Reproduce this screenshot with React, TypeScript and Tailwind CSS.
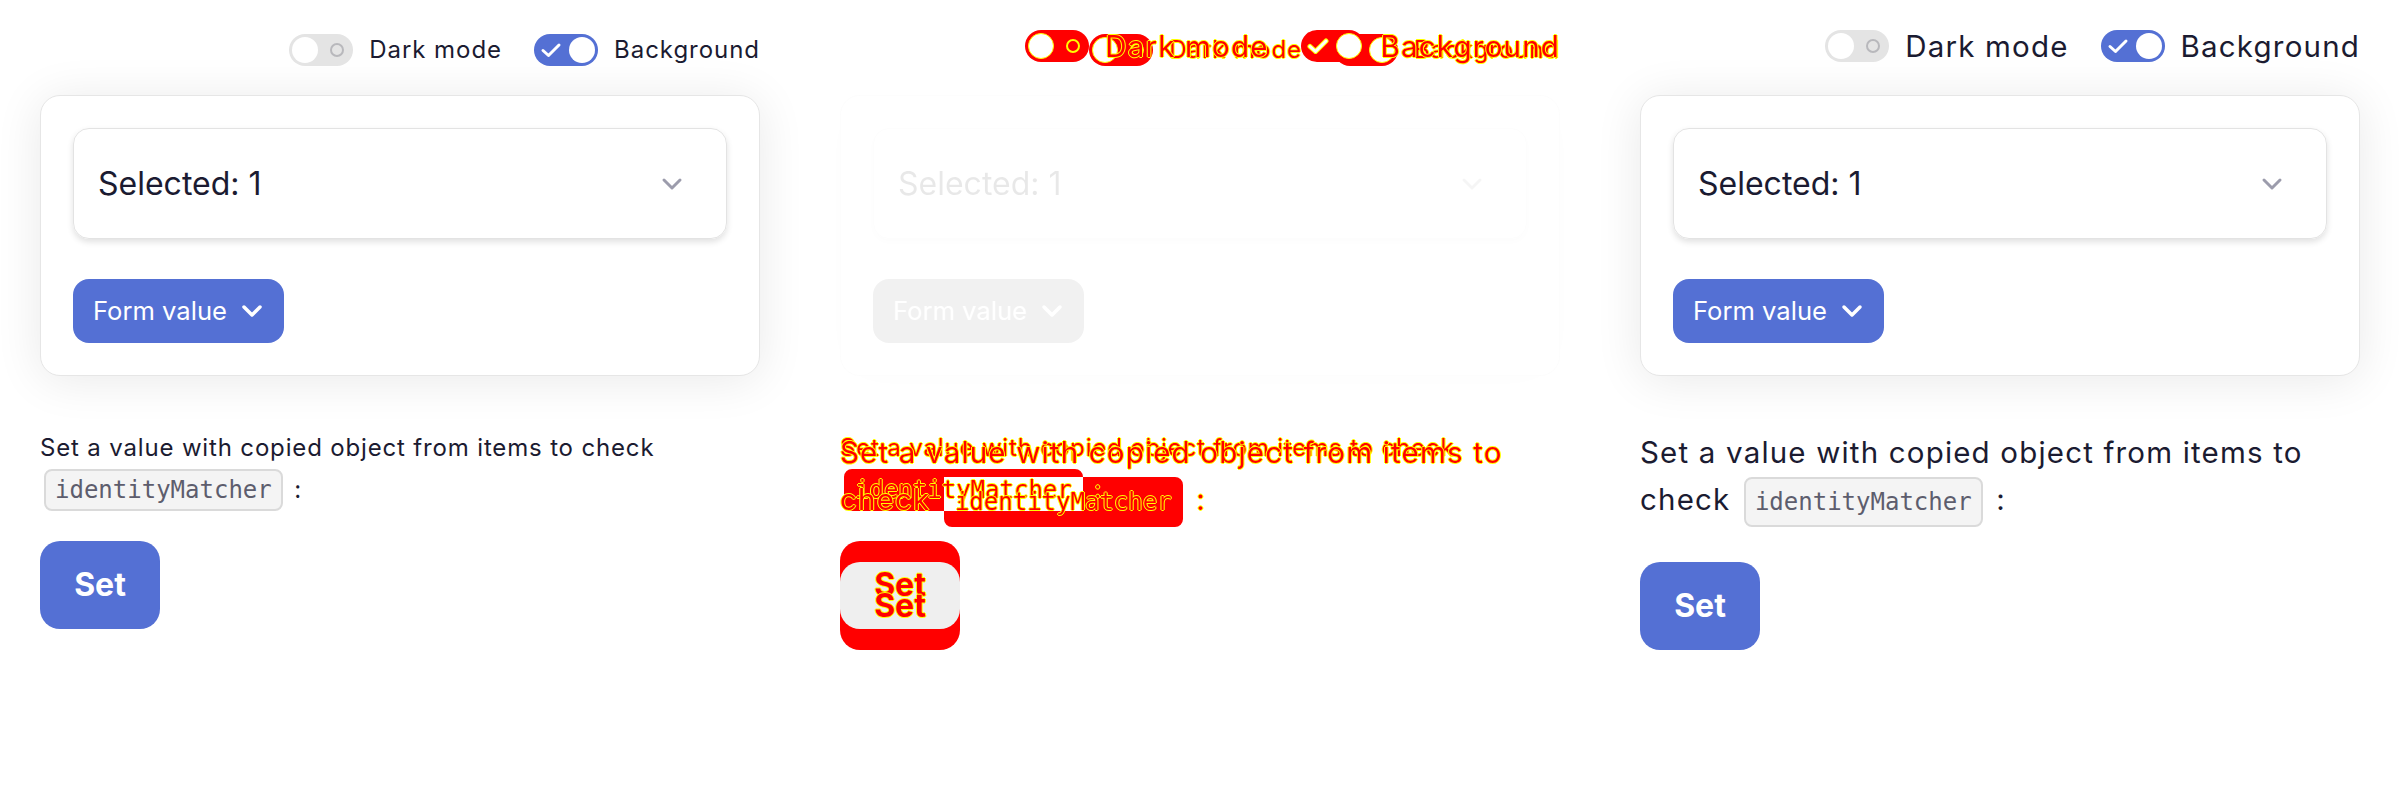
import type { ReactNode } from 'react';

// Three views of the same demo: small text, a pixel diff, large text
type Variant = 'normal' | 'shapes' | 'text';
type Size = 'sm' | 'lg';

const BLUE = 'bg-[#5470d4]';
const INK = 'text-[#1b1b31]';
const OUTLINE = '[text-shadow:1px_0_0_#ffff00,-1px_0_0_#ffff00,0_1px_0_#ffff00,0_-1px_0_#ffff00]';
const DIFF_TEXT = `text-[#ff0000] ${OUTLINE}`;

const SIZES = {
  sm: {
    top: 'pt-8',
    row: 'h-9',
    label: 'text-[24px] tracking-[0.04em]',
    para: 'mt-[51px] text-[24px] leading-[42px] tracking-[0.035em]',
    code: 'h-[42px] leading-[38px]',
    setMt: 'mt-[30px]',
  },
  lg: {
    top: 'pt-6',
    row: 'h-[44px]',
    label: 'text-[29.5px] tracking-[0.04em]',
    para: 'mt-[53px] text-[29.5px] leading-[47px] tracking-[0.04em]',
    code: 'h-[50px] leading-[46px]',
    setMt: 'mt-[35px]',
  },
} as const;

function textTone(v: Variant, normal: string) {
  if (v === 'normal') return normal;
  if (v === 'shapes') return 'text-transparent';
  return DIFF_TEXT;
}

function Check({ v }: { v: Variant }) {
  return (
    <svg width="22" height="16" viewBox="0 0 22 16" fill="none" className="ml-[3px]">
      {v === 'shapes' && (
        <path d="M3 8.5 L8.5 13.5 L19 3" stroke="#ffff00" strokeWidth="5" strokeLinecap="round" strokeLinejoin="round" />
      )}
      <path d="M3 8.5 L8.5 13.5 L19 3" stroke="#ffffff" strokeWidth="3" strokeLinecap="round" strokeLinejoin="round" />
    </svg>
  );
}

function Toggle({ on, v }: { on: boolean; v: Variant }) {
  if (v === 'text') return <div className="w-16 h-8 shrink-0" />;
  const body = v === 'shapes' ? 'bg-[#ff0000]' : on ? BLUE : 'bg-[#e4e4e4]';
  const knob = v === 'shapes' ? 'bg-white border border-[#ffff00]' : 'bg-white';
  return (
    <div className={`w-16 h-8 shrink-0 rounded-full ${body} flex items-center justify-between px-[3px]`}>
      {on ? (
        <>
          <Check v={v} />
          <div className={`w-[26px] h-[26px] rounded-full ${knob}`} />
        </>
      ) : (
        <>
          <div className={`w-[26px] h-[26px] rounded-full ${knob}`} />
          <div
            className={`w-[14px] h-[14px] mr-[6px] rounded-full border-2 ${
              v === 'shapes' ? 'border-[#ffff00]' : 'border-[#b8b8bc]'
            }`}
          />
        </>
      )}
    </div>
  );
}

function Chevron({ color, width }: { color: string; width: number }) {
  return (
    <svg width="22" height="14" viewBox="0 0 22 14" fill="none">
      <path d="M3 3 L11 11 L19 3" stroke={color} strokeWidth={width} strokeLinecap="round" strokeLinejoin="round" />
    </svg>
  );
}

function Card({ v }: { v: Variant }) {
  return (
    <div
      className={`mt-[27px] rounded-[20px] border border-[#e6e6e6] bg-white p-8 shadow-[0_4px_48px_rgba(0,0,0,0.09)] ${
        v === 'normal' ? '' : 'invisible'
      }`}
    >
      <div className="h-[111px] flex items-center justify-between pl-6 pr-[43px] rounded-2xl border border-[#e3e3e3] shadow-[0_3px_6px_rgba(0,0,0,0.12)]">
        <span className={`text-[32px] ${INK}`}>Selected: 1</span>
        <Chevron color="#9c9cac" width={3} />
      </div>
      <div className="mt-10 flex">
        <button className={`h-16 flex items-center gap-[14px] pl-5 pr-[21px] rounded-2xl ${BLUE} text-white text-[25.6px]`}>
          Form value
          <Chevron color="#ffffff" width={3.5} />
        </button>
      </div>
    </div>
  );
}

function Panel({ size, v }: { size: Size; v: Variant }) {
  const s = SIZES[size];
  const codeBox =
    v === 'normal'
      ? 'bg-[#f4f4f4] border-[#dadada] text-[#5d5d6d]'
      : v === 'shapes'
        ? 'bg-[#ff0000] border-[#ff0000] text-transparent'
        : `bg-transparent border-transparent ${DIFF_TEXT}`;
  const setBtn =
    v === 'normal'
      ? `${BLUE} text-white`
      : v === 'shapes'
        ? 'bg-[#ff0000] text-transparent'
        : `bg-transparent ${DIFF_TEXT}`;
  const label = `${s.label} ${textTone(v, INK)}`;

  const code: ReactNode = (
    <code
      className={`inline-block align-baseline mx-1 px-[9px] rounded-lg border-2 text-[24px] tracking-normal font-['DejaVu_Sans_Mono',monospace] ${s.code} ${codeBox}`}
    >
      identityMatcher
    </code>
  );

  return (
    <div className={`w-[800px] shrink-0 px-10 ${s.top}`}>
      {/* toggles */}
      <div className={`flex items-center justify-end gap-8 ${s.row}`}>
        <div className="flex items-center gap-4">
          <Toggle on={false} v={v} />
          <span className={label}>Dark mode</span>
        </div>
        <div className="flex items-center gap-4">
          <Toggle on={true} v={v} />
          <span className={label}>Background</span>
        </div>
      </div>

      <Card v={v} />

      <p className={`${s.para} ${textTone(v, INK)}`}>
        {size === 'sm' ? (
          <>
            Set a value with copied object from items to check
            <br />
            {code} :
          </>
        ) : (
          <>
            Set a value with copied object from items to
            <br />
            check {code} :
          </>
        )}
      </p>

      <button
        className={`${s.setMt} w-[120px] h-[88px] rounded-[20px] flex items-center justify-center text-[32px] font-bold ${setBtn}`}
      >
        Set
      </button>
    </div>
  );
}

function DiffPanel() {
  return (
    <div className="relative w-[800px] shrink-0">
      <div className="grayscale opacity-10">
        <Panel size="sm" v="normal" />
      </div>
      <div className="absolute inset-0">
        <Panel size="sm" v="shapes" />
      </div>
      <div className="absolute inset-0">
        <Panel size="lg" v="shapes" />
      </div>
      {/* where both code boxes / buttons overlap the pixels match */}
      <div className="absolute left-[144px] top-[477px] w-[139px] h-[34px] bg-white" />
      <div className="absolute left-[40px] top-[562px] w-[120px] h-[67px] rounded-[20px] bg-[#efefef]" />
      <div className="absolute inset-0">
        <Panel size="sm" v="text" />
      </div>
      <div className="absolute inset-0">
        <Panel size="lg" v="text" />
      </div>
    </div>
  );
}

export default function App() {
  return (
    <div className="flex w-[2400px] min-h-[800px] bg-white font-['Inter',sans-serif]">
      <Panel size="sm" v="normal" />
      <DiffPanel />
      <Panel size="lg" v="normal" />
    </div>
  );
}
